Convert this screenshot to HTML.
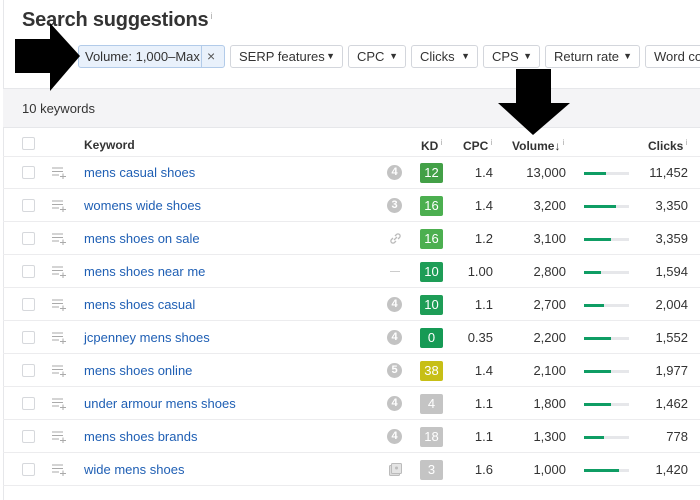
<!DOCTYPE html>
<html><head><meta charset="utf-8"><style>
*{margin:0;padding:0;box-sizing:border-box}
body{width:700px;height:500px;overflow:hidden;background:#fff;font-family:"Liberation Sans",Arial,sans-serif;position:relative;color:#333}
.a{position:absolute}
h1{position:absolute;left:22px;top:9px;font-size:20px;font-weight:bold;color:#333;letter-spacing:-0.2px}
h1 sup{font-size:9px;color:#aaa;font-weight:normal;vertical-align:top;position:relative;top:2px;left:2px}
.btn{position:absolute;top:45px;height:23px;border:1px solid #d3d6dc;border-radius:3px;background:#fff;font-size:13px;color:#333;line-height:21px;padding-left:8px;white-space:nowrap;overflow:hidden}
.btn i{font-style:normal;font-size:9px;position:absolute;right:7px;top:0}
.band{position:absolute;left:3px;right:0;top:88px;height:40px;background:#f4f4f6;border-top:1px solid #e6e7ea;border-bottom:1px solid #e6e7ea}
.row{position:absolute;left:3px;right:0;height:33px;border-bottom:1px solid #ececee}
.cb{position:absolute;left:19px;top:10px;width:13px;height:13px;border:1px solid #d6d8dc;border-radius:2px;background:#fff}
.kw{position:absolute;left:81px;top:9px;font-size:13px;color:#1f5fb4}
.num{position:absolute;font-size:13px;color:#333;top:9px;text-align:right}
.kd{position:absolute;left:417px;top:7px;width:23px;height:20px;border-radius:2px;color:#fff;font-size:13px;text-align:center;line-height:20px}
.circ{position:absolute;left:384px;top:9px;width:15px;height:15px;border-radius:50%;background:#c3c3c3;color:#fff;font-size:11px;font-weight:bold;text-align:center;line-height:15px}
.bar{position:absolute;left:581px;top:16px;width:45px;height:3px;background:#e6e7ea}
.bar b{display:block;height:3px;background:#0f9d64}
.th{position:absolute;top:138px;font-size:12px;font-weight:bold;color:#333}
.th sup{font-size:8px;color:#aaa;font-weight:normal}
</style></head><body>
<div class="a" style="left:3px;top:0;width:1px;height:500px;background:#e6e7ea"></div>
<h1>Search suggestions<sup>i</sup></h1>
<div class="btn" style="left:78px;width:147px;background:#e9f1fb;border-color:#b2cbe9;padding-left:6px">Volume: 1,000–Max<span class="a" style="left:122px;top:0;width:1px;height:21px;background:#b2cbe9"></span><span class="a" style="left:128px;top:0;font-size:14px;color:#555">×</span></div>
<div class="btn" style="left:230px;width:113px">SERP features<i>▼</i></div>
<div class="btn" style="left:348px;width:58px">CPC<i>▼</i></div>
<div class="btn" style="left:411px;width:67px">Clicks<i>▼</i></div>
<div class="btn" style="left:483px;width:57px">CPS<i>▼</i></div>
<div class="btn" style="left:545px;width:95px">Return rate<i>▼</i></div>
<div class="btn" style="left:645px;width:70px">Word count</div>
<div class="band"><div class="a" style="left:19px;top:12px;font-size:13px;color:#333">10 keywords</div></div>
<div class="row" style="top:128px;height:29px"><div class="cb" style="top:9px"></div></div>
<div class="th" style="left:84px">Keyword</div>
<div class="th" style="left:421px">KD<sup> i</sup></div>
<div class="th" style="left:463px">CPC<sup> i</sup></div>
<div class="th" style="left:512px">Volume<span style="font-size:12px">↓</span><sup> i</sup></div>
<div class="th" style="left:648px">Clicks<sup> i</sup></div>
<div id="rows"></div>
<svg class="a" style="left:0;top:0" width="700" height="500">
<polygon points="15,39 50,39 50,23 80,56 50,91 50,73 15,73" fill="#000"/>
<polygon points="516,69 551,69 551,103 570,103 533,135 498,103 516,103" fill="#000"/>
</svg>
<script>
var d=[["mens casual shoes","c4","12","#43a047","1.4","13,000",22,"11,452"],
["womens wide shoes","c3","16","#4caf50","1.4","3,200",32,"3,350"],
["mens shoes on sale","link","16","#4caf50","1.2","3,100",27,"3,359"],
["mens shoes near me","dash","10","#1e9d57","1.00","2,800",17,"1,594"],
["mens shoes casual","c4","10","#1e9d57","1.1","2,700",20,"2,004"],
["jcpenney mens shoes","c4","0","#169a55","0.35","2,200",27,"1,552"],
["mens shoes online","c5","38","#c7bf16","1.4","2,100",27,"1,977"],
["under armour mens shoes","c4","4","#c4c4c4","1.1","1,800",27,"1,462"],
["mens shoes brands","c4","18","#c4c4c4","1.1","1,300",20,"778"],
["wide mens shoes","img","3","#c4c4c4","1.6","1,000",35,"1,420"]];
var h="";
d.forEach(function(r,i){
var t=156+i*33,ic="";
if(r[1][0]=="c")ic='<div class="circ">'+r[1][1]+'</div>';
else if(r[1]=="link")ic='<svg class="a" style="left:386px;top:10px" width="13" height="13"><path d="M5 8l3-3M4 6l-1.5 1.5a2 2 0 0 0 3 3L7 9M9 7l1.5-1.5a2 2 0 0 0-3-3L6 4" stroke="#bbb" stroke-width="1.3" fill="none"/></svg>';
else if(r[1]=="dash")ic='<div class="a" style="left:387px;top:16px;width:10px;height:1px;background:#ccc"></div>';
else ic='<svg class="a" style="left:386px;top:10px" width="13" height="13"><rect x="0.5" y="2.5" width="10" height="10" rx="1" fill="#ddd" stroke="#bbb"/><rect x="2.5" y="0.5" width="10" height="10" rx="1" fill="#e4e4e4" stroke="#bbb"/><circle cx="7.5" cy="5" r="1.5" fill="#bbb"/></svg>';
h+='<div class="row" style="top:'+t+'px"><div class="cb"></div>'+
'<svg class="a" style="left:49px;top:10px" width="14" height="13"><path d="M0 2h11M0 5.5h11M0 9h7M8 10.5h6M11 7.5v6" stroke="#aaa" stroke-width="1" fill="none"/></svg>'+
'<div class="kw">'+r[0]+'</div>'+ic+
'<div class="kd" style="background:'+r[3]+'">'+r[2]+'</div>'+
'<div class="num" style="right:207px">'+r[4]+'</div>'+
'<div class="num" style="right:134px">'+r[5]+'</div>'+
'<div class="bar"><b style="width:'+r[6]+'px"></b></div>'+
'<div class="num" style="right:12px">'+r[7]+'</div></div>';
});
document.getElementById("rows").innerHTML=h;
</script>
</body></html>
